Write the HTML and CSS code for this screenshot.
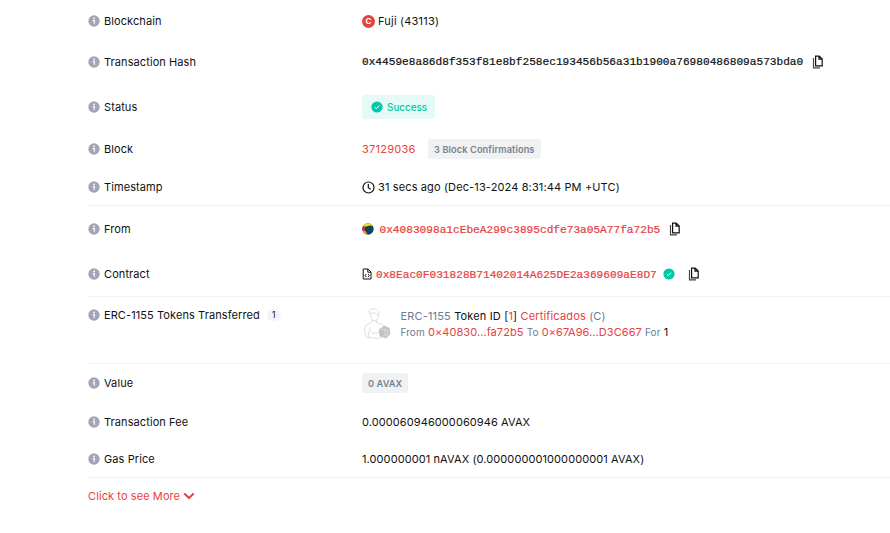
FILE: index.html
```html
<!DOCTYPE html>
<html lang="en">
<head>
<meta charset="utf-8">
<title>Transaction details</title>
<link rel="stylesheet" href="styles.css">
</head>
<body>
<svg width="0" height="0" class="defs">
  <symbol id="info" viewBox="0 0 12 12"><circle cx="6" cy="6" r="5.7" fill="#a1a5b5"/><circle cx="6.1" cy="3.4" r=".9" fill="#fff"/><path d="M4.7 5.6h1.6v3.2" fill="none" stroke="#fff" stroke-width="1.2"/></symbol>
  <symbol id="copy" viewBox="0 0 12 14"><path d="M3.6 1.2h3.6L10.2 4v6.8H3.6z M7 1.2v3h3" fill="none" stroke="#111" stroke-width="1.2"/><path d="M1.5 3v9.9h6.5" fill="none" stroke="#444" stroke-width="1.2"/></symbol>
  <symbol id="check" viewBox="0 0 12 12"><circle cx="6" cy="6" r="5.6" fill="#00c9a7"/><path d="M3.8 6.2l1.5 1.4 3-3" fill="none" stroke="#fff" stroke-width="1"/></symbol>
</svg>
<main class="details">
  <div class="row chain"><div class="label"><svg class="info"><use href="#info"/></svg>Blockchain</div><div class="value"><span class="coin">C</span><span class="network">Fuji (43113)</span></div></div>
  <div class="row hash"><div class="label"><svg class="info"><use href="#info"/></svg>Transaction Hash</div><div class="value"><span class="mono">0x4459e8a86d8f353f81e8bf258ec193456b56a31b1900a76980486809a573bda0</span><svg class="copy"><use href="#copy"/></svg></div></div>
  <div class="row status"><div class="label"><svg class="info"><use href="#info"/></svg>Status</div><div class="value"><span class="success"><svg class="check"><use href="#check"/></svg>Success</span></div></div>
  <div class="row block"><div class="label"><svg class="info"><use href="#info"/></svg>Block</div><div class="value"><a class="link number">37129036</a><span class="badge confirmations">3 Block Confirmations</span></div></div>
  <div class="row time line"><div class="label"><svg class="info"><use href="#info"/></svg>Timestamp</div><div class="value"><svg class="clock" viewBox="0 0 13 13"><circle cx="6.5" cy="6.5" r="5.5"/><path d="M6.3 3v3.7l2.5 1.5"/></svg><span class="stamp">31 secs ago (Dec-13-2024 8:31:44 PM +UTC)</span></div></div>
  <div class="row from"><div class="label"><svg class="info"><use href="#info"/></svg>From</div><div class="value"><svg class="avatar" viewBox="0 0 12 12"><clipPath id="round"><circle cx="6" cy="6" r="5.7"/></clipPath><g clip-path="url(#round)"><path fill="#0b4562" d="M0 0h12v12H0z"/><path fill="#f7df00" d="M0 0h12v3.6L8 2.6 3 3.8 0 3z"/><path fill="#e6194f" d="M0 3l3.5 1.2-1 4L0 8z"/><path fill="#f69a0c" d="M0 8l3-.5L6 12H0z"/></g></svg><a class="mono link">0x4083098a1cEbeA299c3895cdfe73a05A77fa72b5</a><svg class="copy"><use href="#copy"/></svg></div></div>
  <div class="row contract line"><div class="label"><svg class="info"><use href="#info"/></svg>Contract</div><div class="value"><svg class="file" viewBox="0 0 10 12"><path d="M1.2 1h4.8l3 3v7H1.2z"/><path d="M5.8 1v3.2H9"/><path d="M4.3 6L3 7.5 4.3 9M6 6l1.3 1.5L6 9"/></svg><a class="mono link">0x8Eac0F031828B71402014A625DE2a369609aE8D7</a><svg class="check"><use href="#check"/></svg><svg class="copy"><use href="#copy"/></svg></div></div>
  <div class="row tokens line"><div class="label"><svg class="info"><use href="#info"/></svg><span class="tokens-title">ERC-1155 Tokens Transferred</span><span class="count">1</span></div>
    <div class="value"><svg class="picture" viewBox="0 0 30 34"><g fill="none" stroke="#d4d4d4" stroke-width=".8"><path d="M7 7C4 5 7 1 12 2c4 1 5 4 3 6-2-2-5-3-8-1zM8 7c-1 4 1 7 4 7 3-1 4-4 3-7M9 13c1 2-1 3-4 4-4 2-4 7-2 11M13 13l1 3c4 1 7 1 8 5M3 28c-1 2 1 3 3 2M7 20c-1 3 1 5 3 6M6 24l-1 6c5 1 10 2 15 0M10 26c4 1 8-1 9-4"/></g><path d="M21 19l5 2 1 6-4 4-6-2-1-6z" fill="#c3c3c3" stroke="#bbb" stroke-width=".6"/><path d="M18 23l4-1 3 2-1 4-4 1M22 22v6" fill="none" stroke="#e3e3e3" stroke-width=".7"/></svg>
      <div class="transfer"><p class="token"><span class="muted">ERC-1155</span> Token ID [<a class="link">1</a>] <a class="link">Certificados</a> <span class="muted">(C)</span></p><p class="route"><span class="muted small">From</span> <a class="link">0×40830...fa72b5</a> <span class="muted small">To</span> <a class="link">0×67A96...D3C667</a> <span class="muted small">For</span> 1</p></div>
    </div></div>
  <div class="row amount"><div class="label"><svg class="info"><use href="#info"/></svg>Value</div><div class="value"><span class="badge">0 AVAX</span></div></div>
  <div class="row fee"><div class="label"><svg class="info"><use href="#info"/></svg>Transaction Fee</div><div class="value"><span class="fee-text">0.000060946000060946 AVAX</span></div></div>
  <div class="row gas line"><div class="label"><svg class="info"><use href="#info"/></svg>Gas Price</div><div class="value"><span class="gas-text">1.000000001 nAVAX (0.000000001000000001 AVAX)</span></div></div>
  <div class="row more"><a class="link">Click to see More</a><svg class="chevron" viewBox="0 0 12 8"><path d="M1.3 1.5L6 6l4.7-4.5"/></svg></div>
</main>
</body>
</html>
```
FILE: styles.css
```css
* { box-sizing: border-box; }
body { margin: 0; background: #fff; color: #111; font: 11px/16px Inter, sans-serif; letter-spacing: .09px; overflow: hidden; }
p { margin: 0; }
svg { flex: none; }
.defs { display: block; height: 0; }
.details { margin-left: 88px; }
.row { display: flex; align-items: center; white-space: nowrap; }
.line { border-bottom: 1px solid #f1f2f4; }
.label { display: flex; align-items: center; width: 274px; flex: none; }
.value { display: flex; align-items: center; }
.info { width: 12px; height: 12px; margin-right: 4px; }
.link { color: #e84142; }
.muted { color: #6c7a92; }
.mono { font: 11.15px/16px "Liberation Mono", monospace; letter-spacing: 0; -webkit-text-stroke: .22px currentColor; }
.copy { width: 12px; height: 14px; margin-left: 9px; }
.check { width: 12px; height: 12px; }
.chain { height: 42px; }
.hash { height: 40px; }
.status { height: 50px; }
.block { height: 34px; }
.time { height: 40px; padding-top: 3px; }
.from { height: 46px; }
.from .mono, .contract .mono { padding-top: 2px; }
.contract { height: 45px; }
.tokens { height: 67px; align-items: flex-start; padding-top: 10px; }
.amount { height: 38px; }
.fee { height: 40px; }
.gas { height: 36px; padding-bottom: 1px; }
.more { height: 36px; }
.number { letter-spacing: .25px; }
.stamp { letter-spacing: .13px; }
.token { letter-spacing: .16px; }
.network { letter-spacing: .2px; }
.coin { width: 13px; height: 13px; border-radius: 50%; background: #e84142; color: #fff; font: bold 8px/13px Inter, sans-serif; text-align: center; margin-right: 3px; }
.success { display: flex; align-items: center; height: 24px; width: 73px; padding-left: 9px; gap: 4px; border-radius: 3px; background: #e5f9f6; color: #00c9a7; font-size: 9.9px; font-weight: 500; letter-spacing: 0; line-height: 16px; }
.success .check { margin-top: -1px; }
.badge { height: 20px; padding: 0 6px; border-radius: 3px; background: #f0f1f3; color: #77838f; font-size: 9.2px; font-weight: 600; line-height: 22px; letter-spacing: .1px; }
.confirmations { margin-left: 12px; padding: 0 6.5px; }
.clock { width: 13px; height: 13px; margin-right: 3px; fill: none; stroke: #111; stroke-width: 1.2; }
.avatar { width: 12px; height: 12px; margin: 0 5.5px 1px 0; }
.file { width: 10px; height: 12px; margin-right: 4px; fill: none; stroke: #111; stroke-width: 1; }
.contract .check { margin-left: 6px; }
.contract .copy { margin-left: 13px; }
.count { width: 14px; height: 12px; margin-left: 7px; border-radius: 6px; background: #f3f4f8; font-size: 8.5px; line-height: 13px; text-align: center; }
.picture { width: 30px; height: 34px; margin-left: 1px; }
.transfer { margin-left: 7.5px; }
.route { margin-top: 1px; letter-spacing: .07px; line-height: 15px; }
.small { font-size: 10px; }
.chevron { width: 12px; height: 8px; margin-left: 3px; fill: none; stroke: #e84142; stroke-width: 2; }
```
